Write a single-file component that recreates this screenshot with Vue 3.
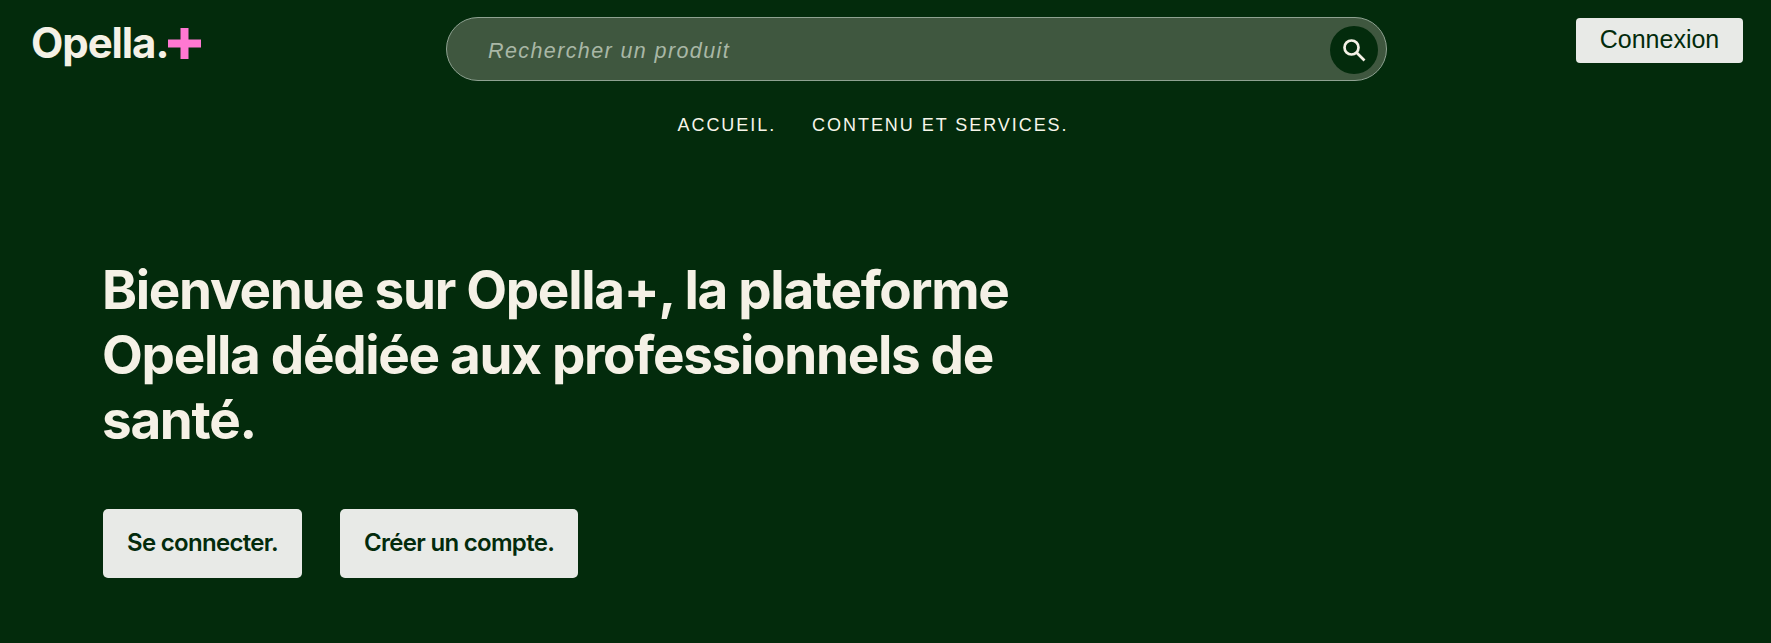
<script setup>
const navItems = ['ACCUEIL.', 'CONTENU ET SERVICES.']
</script>

<template>
  <div class="page">
    <header class="top">
      <div class="logo">
        <span class="logo-text">Opella.</span>
        <svg class="plus" width="33" height="31" viewBox="0 0 33 31"><path d="M12.5 0h8v11.500h12.500v8H20.500v11.500h-8V19.500H0v-8h12.500z" fill="#ff78d2"/></svg>
      </div>
      <div class="search">
        <span class="placeholder">Rechercher un produit</span>
        <span class="search-btn">
          <svg width="24" height="24" viewBox="0 0 24 24" fill="none" stroke="#f5f1e6" stroke-width="2.7"><circle cx="9.500" cy="9.500" r="7"/><path d="M14.500 14.500l8 8"/></svg>
        </span>
      </div>
      <button class="login">Connexion</button>
    </header>
    <nav class="nav">
      <a v-for="item in navItems" :key="item">{{ item }}</a>
    </nav>
    <section class="hero">
      <h1>Bienvenue sur Opella+, la plateforme Opella dédiée aux professionnels de santé.</h1>
      <div class="actions">
        <button class="cta">Se connecter.</button>
        <button class="cta">Créer un compte.</button>
      </div>
    </section>
  </div>
</template>

<style>
html, body { margin: 0; background: #032b0c; overflow: hidden; }
</style>

<style scoped>
.page {
  height: 643px;
  background: #032b0c;
  font-family: "Liberation Sans", Arial, sans-serif;
  color: #f5f1e6;
  overflow: hidden;
}
.top {
  display: grid;
  grid-template-columns: 446px 941px 1fr;
  padding-top: 17px;
  height: 64px;
}
.logo {
  display: flex;
  align-items: flex-start;
  padding: 3px 0 0 31px;
}
.logo-text {
  font-family: Inter, sans-serif;
  font-size: 42px;
  font-weight: 700;
  line-height: 46px;
  letter-spacing: -1.1px;
}
.plus { margin: 8px 0 0 0; }
.search {
  box-sizing: border-box;
  height: 64px;
  border: 1px solid #8fa292;
  border-radius: 32px;
  background: #3f573f;
  display: flex;
  align-items: center;
  justify-content: space-between;
  padding: 0 8px 0 41px;
}
.placeholder {
  font-style: italic;
  font-size: 21.500px;
  letter-spacing: 1.400px;
  color: #a9b7a6;
  position: relative;
  top: 2px;
}
.search-btn {
  width: 48px;
  height: 48px;
  margin-top: 2px;
  border-radius: 50%;
  background: #032b0c;
  display: flex;
  align-items: center;
  justify-content: center;
}
.login {
  justify-self: end;
  align-self: start;
  margin: 1px 28px 0 0;
  width: 167px;
  height: 45px;
  border: 0;
  border-radius: 4px;
  background: #e8eae7;
  color: #032b0c;
  font-family: "Liberation Sans", Arial, sans-serif;
  font-size: 25px;
  padding: 0 0 2px;
}
.nav {
  display: flex;
  justify-content: center;
  gap: 36px;
  margin-top: 33px;
  padding-right: 25px;
  font-size: 18px;
  line-height: 22px;
  letter-spacing: 1.950px;
  color: #f8f6ea;
}
.hero {
  padding: 122px 0 0 103px;
}
h1 {
  margin: 0 0 0 -1px;
  width: 960px;
  font-family: Inter, sans-serif;
  font-size: 53px;
  font-weight: 700;
  line-height: 65px;
  letter-spacing: -1.300px;
}
.actions {
  display: flex;
  gap: 38px;
  margin-top: 56px;
}
.cta {
  height: 69px;
  padding: 0 24px 2px;
  border: 0;
  border-radius: 5px;
  background: #e8eae7;
  color: #032b0c;
  font-family: Inter, sans-serif;
  font-size: 24px;
  font-weight: 600;
  letter-spacing: -0.700px;
}
</style>
